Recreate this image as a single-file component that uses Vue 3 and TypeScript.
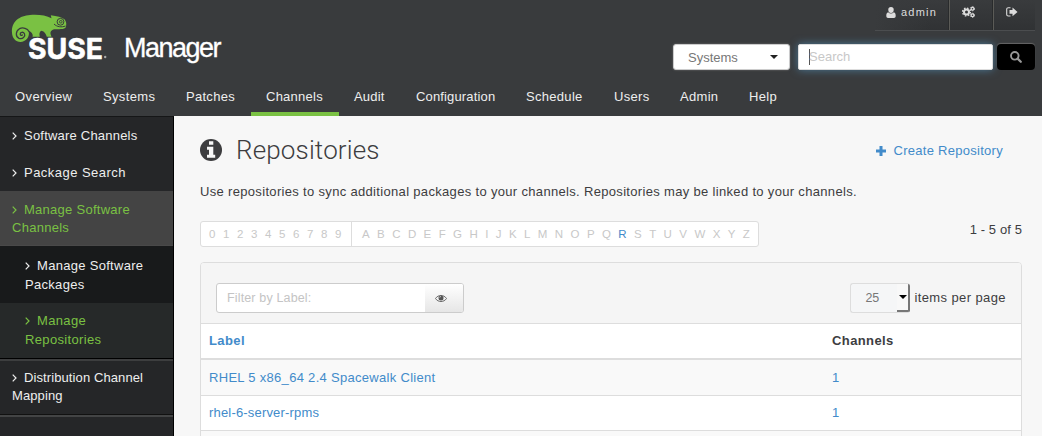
<script setup lang="ts">
interface NavItem { label: string; width: number; tracking: number }

const nav: NavItem[] = [
  { label: 'Overview', width: 88, tracking: 0.4 },
  { label: 'Systems', width: 83, tracking: 0.35 },
  { label: 'Patches', width: 80, tracking: 0.28 },
  { label: 'Channels', width: 88, tracking: 0.25 },
  { label: 'Audit', width: 62, tracking: 0.2 },
  { label: 'Configuration', width: 110, tracking: 0.15 },
  { label: 'Schedule', width: 88, tracking: 0.3 },
  { label: 'Users', width: 66, tracking: 0.3 },
  { label: 'Admin', width: 69, tracking: 0.3 },
  { label: 'Help', width: 58, tracking: 0.3 },
]
const activeNav = 'Channels'

const side = [
  { label: 'Software Channels', kind: 'top', tracking: 0.21 },
  { label: 'Package Search', kind: 'top', tracking: 0.47 },
  { label: 'Manage Software Channels', kind: 'open', tracking: 0.27 },
  { label: 'Manage Software Packages', kind: 'sub', tracking: 0.3 },
  { label: 'Manage Repositories', kind: 'sub current', tracking: 0.35 },
  { label: 'Distribution Channel Mapping', kind: 'top last', tracking: 0.1 },
]

const digits = '0123456789'.split('')
const letters = 'ABCDEFGHIJKLMNOPQRSTUVWXYZ'.split('')

const rows = [
  { label: 'RHEL 5 x86_64 2.4 Spacewalk Client', channels: 1 },
  { label: 'rhel-6-server-rpms', channels: 1 },
]
</script>

<template>
  <div class="page">
    <header class="header">
      <div class="top">
        <div class="brand">
          <svg class="logo" width="112" height="64" viewBox="0 0 112 64">
            <path fill="#7ac143" d="M12 33C11 21 20 15.800 30 15C38 14.300 46 15.300 51.500 18.300L50.800 15.300C57 16 62 17.500 64.500 19.200C66.500 21.500 66.800 25 65.500 27.800C62.500 30 57.500 28.800 54 29.300C51.500 30 50 31.500 50.500 34L51.500 36.700H46.800C46 34 44.500 31.500 41.500 30.800C39.500 31.500 39 34 39.800 36.700H32.500C33.500 34.500 31.500 32 28.500 30.800C30.500 37 25.500 42 20.500 42C15.500 41.800 12.300 38 12 33Z" />
            <path fill="none" stroke="#393b3d" stroke-width="1.300" stroke-linecap="round" d="M29 31.500C27.500 28.500 23 27 19.500 28.700C15.500 31 15.300 36.500 19 38.300C22.500 39.700 25.700 36.500 24.500 33.700C23.300 31.500 20 32 20.200 34.200C20.400 35.500 21.500 35.800 22.300 35" />
            <circle cx="60.500" cy="21.800" r="3.400" fill="none" stroke="#393b3d" stroke-width="1" />
            <circle cx="60.800" cy="21.800" r="1.300" fill="none" stroke="#393b3d" stroke-width=".9" />
            <path fill="none" stroke="#393b3d" stroke-width="1" d="M54 24C57 27 61.500 27.500 65.500 26" />
            <text class="suse" x="28" y="58.700" textLength="75" lengthAdjust="spacingAndGlyphs">SUSE</text>
            <circle cx="105.200" cy="57" r="1.200" fill="#aaa" />
          </svg>
          <span class="product">Manager</span>
        </div>
        <div class="tools">
          <div class="userbar">
            <a class="user">
              <svg width="10" height="11" viewBox="0 0 10 11"><path fill="#dcdcdc" d="M5 0a2.700 2.700 0 0 1 2.700 2.900C7.700 4.700 6.500 6 5 6S2.300 4.700 2.300 2.900A2.700 2.700 0 0 1 5 0zM2.200 5.300C3.800 7 6.200 7 7.800 5.300 9.300 5.500 9.700 7 9.700 9 9.700 10.300 9 11 8 11H2C1 11 .3 10.300 .3 9 .3 7 .7 5.500 2.200 5.300z" /></svg>
              <span>admin</span>
            </a>
            <a class="gears">
              <svg width="13" height="12" viewBox="0 0 13 12">
                <circle cx="4.500" cy="6" r="2.500" fill="none" stroke="#dcdcdc" stroke-width="2" />
                <circle cx="4.500" cy="6" r="3.900" fill="none" stroke="#dcdcdc" stroke-width="1.400" stroke-dasharray="1.600 1.463" />
                <circle cx="10.500" cy="2.700" r="1.400" fill="none" stroke="#dcdcdc" stroke-width="1.200" />
                <circle cx="10.500" cy="2.700" r="2.100" fill="none" stroke="#dcdcdc" stroke-dasharray="1.100 1.100" />
                <circle cx="10.500" cy="9.300" r="1.400" fill="none" stroke="#dcdcdc" stroke-width="1.200" />
                <circle cx="10.500" cy="9.300" r="2.100" fill="none" stroke="#dcdcdc" stroke-dasharray="1.100 1.100" />
              </svg>
            </a>
            <a class="logout">
              <svg width="12" height="10" viewBox="0 0 12 10"><path fill="none" stroke="#dcdcdc" stroke-width="1.100" d="M4.500 .8H2.300C1.300 .8 .7 1.300 .7 2.300V7.500C.7 8.500 1.300 9 2.300 9H4.500" /><path fill="#dcdcdc" d="M3.500 3H6.500V.5L11.500 4.900 6.500 9.300V6.800H3.500z" /></svg>
            </a>
          </div>
          <form class="search" @submit.prevent>
            <div class="scope"><span>Systems</span><i class="caret" /></div>
            <div class="query"><i class="cursor" /><span>Search</span></div>
            <button class="go" type="submit" aria-label="Search">
              <svg width="12" height="12" viewBox="0 0 12 12"><circle cx="4.800" cy="4.800" r="3.800" fill="none" stroke="#999" stroke-width="1.900" /><path d="M7.600 7.600L10.800 10.800" stroke="#999" stroke-width="2.200" stroke-linecap="round" /></svg>
            </button>
          </form>
        </div>
      </div>
      <nav class="nav">
        <a v-for="n in nav" :key="n.label" :class="{ active: n.label === activeNav }" :style="{ width: n.width + 'px', letterSpacing: n.tracking + 'px' }">{{ n.label }}</a>
      </nav>
    </header>

    <div class="body">
      <aside class="side">
        <a v-for="s in side" :key="s.label" :class="s.kind" :style="{ letterSpacing: s.tracking + 'px' }"><svg class="chev" width="5" height="8" viewBox="0 0 5 8"><path d="M.7 .7L4 4 .7 7.300" fill="none" stroke="currentColor" stroke-width="1.200" /></svg>{{ s.label }}</a>
      </aside>

      <main class="main">
        <div class="title">
          <h1>
            <svg width="22" height="22" viewBox="0 0 22 22"><circle cx="11" cy="11" r="11" fill="#3d3d3f" /><path fill="#f7f7f7" d="M9 2.300h4.300v3.500H9zM7 7.800h6.300v8H15.200v3H7v-3h2v-5H7z" /></svg>
            <span>Repositories</span>
          </h1>
          <a class="create">
            <svg width="10" height="10" viewBox="0 0 10 10"><path d="M5 0V10M0 5H10" stroke="#428bca" stroke-width="3" /></svg>
            <span>Create Repository</span>
          </a>
        </div>
        <p class="intro">Use repositories to sync additional packages to your channels. Repositories may be linked to your channels.</p>
        <div class="index">
          <div class="alpha">
            <div class="digits"><span v-for="d in digits" :key="d">{{ d }}</span></div>
            <div class="letters"><span v-for="l in letters" :key="l" :class="{ hit: l === 'R' }">{{ l }}</span></div>
          </div>
          <span class="count">1 - 5 of 5</span>
        </div>
        <section class="panel">
          <div class="panel-head">
            <div class="filter">
              <span class="filter-input">Filter by Label:</span>
              <span class="eye">
                <svg width="12" height="9" viewBox="0 0 12 9"><path d="M.5 4.500C3 .5 9 .5 11.500 4.500 9 8.500 3 8.500 .5 4.500z" fill="none" stroke="#666" /><circle cx="6" cy="3.900" r="2.500" fill="#555" /><path d="M4.700 3.700A1.300 1.300 0 0 1 6 2.400" fill="none" stroke="#ddd" stroke-width=".7" /></svg>
              </span>
            </div>
            <div class="size"><div class="select"><span>25</span><i><b /></i></div><span class="per">items per page</span></div>
          </div>
          <table>
            <thead><tr><th class="c1">Label</th><th>Channels</th></tr></thead>
            <tbody>
              <tr v-for="r in rows" :key="r.label"><td>{{ r.label }}</td><td>{{ r.channels }}</td></tr>
              <tr><td></td><td></td></tr>
            </tbody>
          </table>
        </section>
      </main>
    </div>
  </div>
</template>

<style>
html, body { margin: 0; overflow: hidden; }
</style>

<style scoped>
* { box-sizing: border-box; }
.page { width: 1042px; height: 436px; overflow: hidden; background: #f7f7f7; color: #3d3d3f; font: 13px/18px "Liberation Sans", Arial, sans-serif; letter-spacing: .4px; }
svg { display: block; flex: none; }
.header { height: 116px; background: #393b3d; display: flex; flex-direction: column; }
.top { height: 78px; display: flex; justify-content: space-between; }
.brand { display: flex; }
.suse { font: 700 28.500px Inter, sans-serif; letter-spacing: 0; fill: #fff; stroke: #fff; stroke-width: .6; stroke-linejoin: round; }
.product { margin: 33px 0 0 12px; font-size: 27px; line-height: 31px; letter-spacing: -1.500px; color: #fff; -webkit-text-stroke: .3px #fff; }
.tools { width: 370px; padding-right: 7px; display: flex; flex-direction: column; align-items: flex-end; }
.userbar { display: flex; height: 31px; width: 160px; border-bottom: 1px solid #4b4d4f; background: linear-gradient(90deg, #393b3d, transparent 35%), linear-gradient(#393b3d, #303234); font-size: 11px; letter-spacing: 1.200px; color: #ddd; }
.user { width: 75px; display: flex; padding: 7px 0 0 11px; gap: 5px; line-height: 11px; border-right: 1px solid #5b5b57; box-shadow: inset -1px 0 #292b2c; }
.gears { width: 44px; padding: 6px 0 0 12px; border-right: 1px solid #5b5b57; box-shadow: inset -1px 0 #292b2c; }
.logout { padding: 7px 0 0 12px; }
.search { display: flex; justify-content: flex-end; width: 363px; height: 26px; margin: 13px 0 0; }
.scope { width: 117px; height: 26px; border: 1px solid #ccc; border-radius: 3px; background: #fff; display: flex; align-items: center; padding: 1px 11px 0 14px; justify-content: space-between; color: #777; letter-spacing: 0; box-shadow: 0 0 2px #777; }
.caret { border: 4px solid transparent; border-top: 4px solid #222; border-bottom: 0; margin-top: -2px; }
.query { margin-left: 8px; width: 195px; height: 26px; border-radius: 2px; background: #fff; border: 1px solid #ddd; display: flex; align-items: center; padding-left: 10px; color: #c8c8c8; letter-spacing: 0; box-shadow: 0 0 8px rgba(82, 145, 190, .7); }
.cursor { width: 1px; height: 16px; background: #555; margin-right: -1px; }
.go { margin: 0 0 0 4px; padding: 0; width: 38px; height: 26px; border: 0; border-radius: 4px; background: #000; display: grid; place-items: center; box-shadow: 0 -1px 1px 0 #666; }
.nav { display: flex; height: 38px; }
.nav a { flex: none; padding: 10px 0 0 15px; color: #eee; white-space: nowrap; }
.nav .active { border-bottom: 4px solid #7ac143; }
.body { display: flex; height: 320px; }
.side { width: 174px; flex: none; border-right: 1px solid #000; border-top: 1px solid #151617; background: #252628; color: #eee; }
.side a { display: block; padding: 10px 12px 9px; height: 37px; }
.side .chev { display: inline-block; margin-right: 7px; }
.side .open { height: 55px; background: #444; color: #7ac143; border-bottom: 1px solid #494949; }
.side .sub { height: 57px; padding: 10px 20px 0 25px; line-height: 19px; background: #181a1b; }
.side .current { height: 55px; padding-top: 8px; background: #262929; color: #7ac143; }
.side .last { height: 59px; border-top: 1px solid #000; border-bottom: 2px solid #434445; box-shadow: inset 0 2px #3d3e3f, inset 0 -1px #111; padding-top: 10px; }
.main { width: 822px; margin-left: 26px; }
.title { display: flex; height: 67px; justify-content: space-between; }
h1 { margin: 18px 0 0; height: 32px; display: flex; align-items: center; font: 300 26px/32px Roboto, sans-serif; letter-spacing: .15px; gap: 14px; }
.create { display: flex; align-items: center; height: 18px; margin: 26px 19px 0 0; gap: 7px; color: #428bca; letter-spacing: .28px; }
.intro { margin: 0; height: 38px; white-space: nowrap; letter-spacing: .325px; }
.index { display: flex; justify-content: space-between; }
.alpha { height: 26px; width: 559px; border: 1px solid #ddd; border-radius: 3px; background: #fff; display: flex; font-size: 11.500px; line-height: 24px; color: #c8c8c8; letter-spacing: 0; }
.digits { width: 151px; padding-left: 8px; border-right: 1px solid #ddd; display: flex; gap: 7.600px; }
.letters { flex: 1; padding: 0 8px 0 10px; display: flex; justify-content: space-between; }
.hit { color: #428bca; }
.count { height: 18px; letter-spacing: .1px; }
.panel { margin-top: 15px; border: 1px solid #ddd; border-radius: 4px; background: #fff; }
.panel-head { height: 61px; background: #f5f5f5; border-bottom: 1px solid #ddd; border-radius: 3px 3px 0 0; padding: 20px 15px 0; display: flex; justify-content: space-between; }
.filter { width: 248px; height: 30px; border: 1px solid #ccc; border-radius: 3px; display: flex; background: #fff; overflow: hidden; }
.filter-input { width: 208px; padding: 5px 0 0 10px; color: #c4c4c4; font-size: 12.500px; letter-spacing: .15px; }
.eye { flex: 1; background: linear-gradient(#fff, #e6e6e6); padding: 10px 0 0 10px; }
.size { display: flex; }
.select { width: 60px; height: 30px; border: 1px solid #ddd; border-right: 0; border-radius: 3px; background: #f5f6f7; color: #777; display: flex; justify-content: space-between; padding-left: 14px; line-height: 28px; font-size: 12.500px; letter-spacing: 0; }
.select i { width: 13px; background: #f8f8f8; border-right: 2px solid #777; border-bottom: 2px solid #777; border-radius: 0 2px 2px 0; display: grid; place-items: center; }
.select b { width: 8px; border: 4px solid transparent; border-top: 4px solid #000; border-bottom: 0; }
.per { margin-left: 4px; line-height: 30px; }
table { width: 100%; border-collapse: separate; border-spacing: 0; table-layout: fixed; }
th, td { height: 36px; padding: 0 8px; text-align: left; }
th { border-bottom: 2px solid #ddd; font-weight: 700; }
.c1 { width: 623px; color: #428bca; }
td { height: 35px; border-bottom: 1px solid #ddd; color: #428bca; letter-spacing: .3px; }
tbody tr:first-child td { height: 36px; }
tbody tr:nth-child(2) td { letter-spacing: .18px; }
tbody tr:nth-child(odd) td { background: #f9f9f9; }
</style>
